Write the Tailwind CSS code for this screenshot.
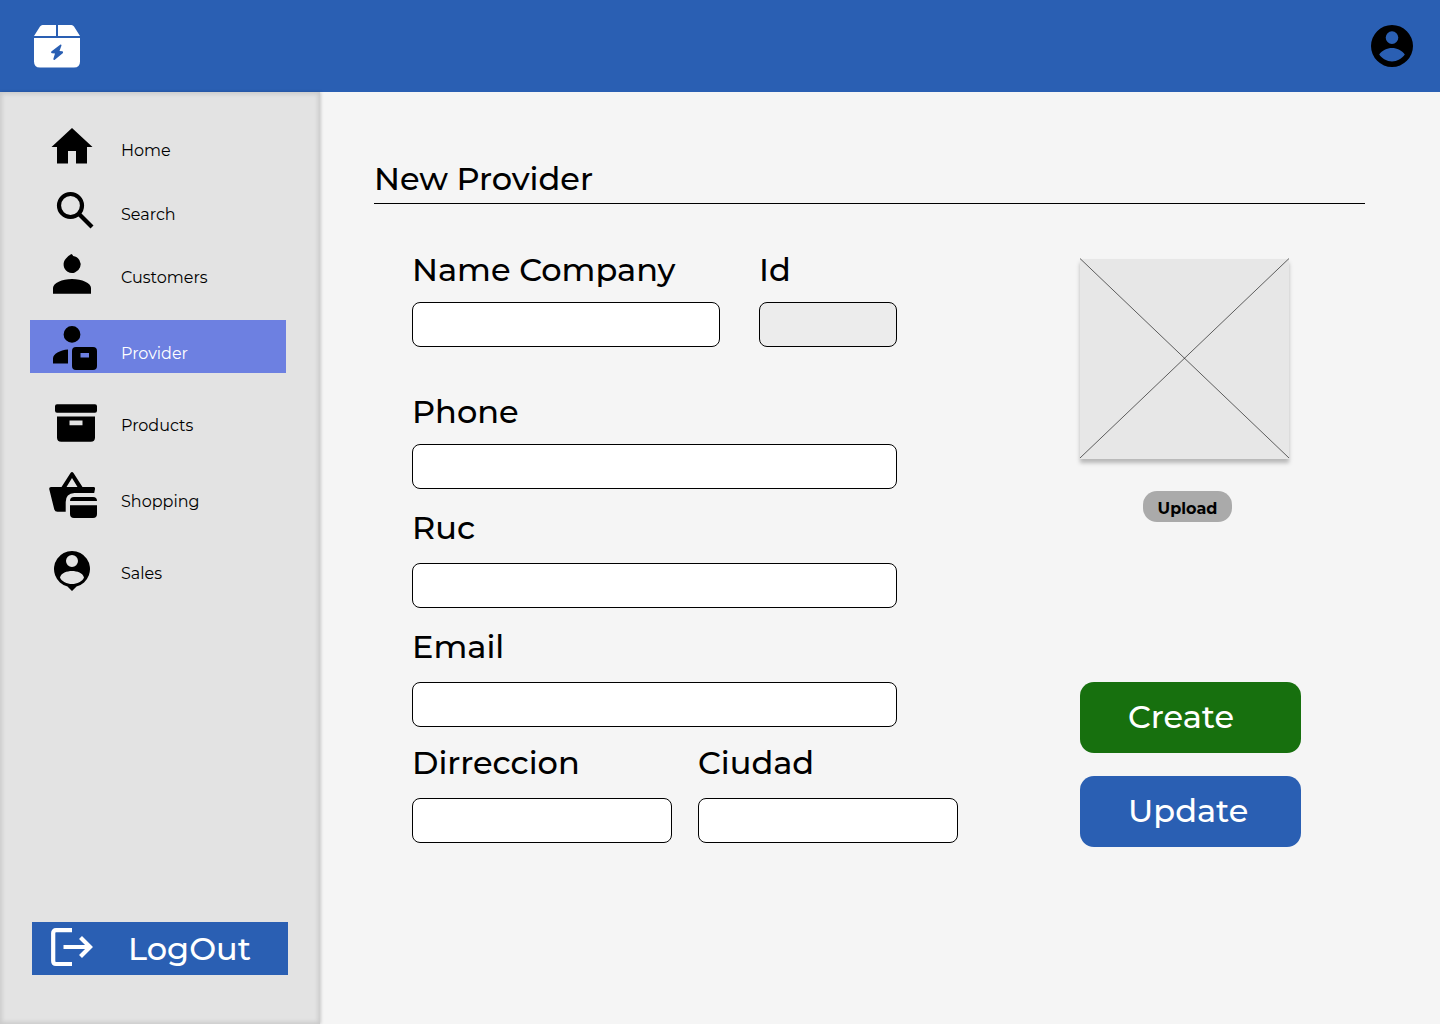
<!DOCTYPE html>
<html lang="en">
<head>
<meta charset="utf-8">
<meta name="viewport" content="width=device-width, initial-scale=1">
<title>New Provider</title>
<script src="https://cdn.jsdelivr.net/npm/@tailwindcss/browser@4"></script>
</head>
<body class="flex min-h-screen flex-col bg-[#f5f5f5] font-[Montserrat,Inter,sans-serif] text-black">
<header class="flex h-[92px] shrink-0 items-center justify-between bg-[#2a5fb3] pr-[27px] pl-[34px]">
  <a href="#" aria-label="Dashboard">
    <svg class="block h-[43px] w-[46px]" viewBox="0 0 46 43" fill="#fff">
      <path d="M8.5 0H22v11H0L6 1.5Q7 0 8.500 0zM24 0h13.500Q39 0 40 1.500L46 11H24zM0 13h46v23.500q0 6-6 6H6q-6 0-6-6z"/>
      <path fill="#2a5fb3" d="M26.500 19.500 17.300 26.500Q16.500 28 18 28.200L21 28.500 19.300 34Q19.500 35.500 20.800 34.800L29 28Q29.500 26.500 28.200 26.300L25.500 26 27.500 20.500Q27.500 19.300 26.500 19.500z"/>
    </svg>
  </a>
  <button type="button" aria-label="Account">
    <svg class="block size-[42px]" viewBox="0 0 42 42"><path fill-rule="evenodd" d="M21 0a21 21 0 1 1 0 42a21 21 0 1 1 0-42zM21 6.300a6.300 6.300 0 1 0 0 12.600a6.300 6.300 0 1 0 0-12.600zM8.200 29.500C11 25.500 16 23 21 23s10 2.500 12.800 6.500C31 33.500 26 36.500 21 36.500S11 33.500 8.200 29.500z"/></svg>
  </button>
</header>
<div class="flex grow">
  <aside class="flex w-80 shrink-0 flex-col bg-[#e3e3e3] pt-[25px] pb-[49px] shadow-[inset_0_0_4px_2px_rgba(0,0,0,0.11),1px_0_3px_rgba(0,0,0,0.18)]">
    <nav class="pr-[34px] pl-[30px]">
      <ul class="text-base leading-6">
        <li><a href="#" class="flex h-[53px] items-center gap-6 pl-[17px]">
          <svg class="h-[53px] w-[50px] shrink-0" viewBox="0 0 50 53"><path d="M25 11 45.500 30H40v16.500H29V34h-8v12.500H10V30H4.500z"/></svg>
          <span class="pt-3.5">Home</span></a></li>
        <li class="mt-[11px]"><a href="#" class="flex h-[53px] items-center gap-6 pl-[17px]">
          <svg class="h-[53px] w-[50px] shrink-0" viewBox="0 0 50 53" fill="none" stroke="#000" stroke-width="4.200"><circle cx="23.500" cy="24.500" r="11.500"/><path d="m32 33 13 13"/></svg>
          <span class="pt-3.5">Search</span></a></li>
        <li class="mt-[10px]"><a href="#" class="flex h-[53px] items-center gap-6 pl-[17px]">
          <svg class="h-[53px] w-[50px] shrink-0" viewBox="0 0 50 53"><path d="M24.500 10Q25.500 10.300 26.200 12A8.500 8.500 0 1 1 19 14.500Q21 11.500 24.500 10zM6 49.700V44C6 39 15 35 25 35s19 4 19 9v5.700z"/></svg>
          <span class="pt-3.5">Customers</span></a></li>
        <li class="mt-[23px]"><a href="#" aria-current="page" class="flex h-[53px] items-center gap-6 bg-[#6d80e1] pl-[17px] text-white">
          <svg class="h-[53px] w-[50px] shrink-0" viewBox="0 0 50 53"><path fill-rule="evenodd" d="M25 6a8.400 8.400 0 1 1 0 16.800A8.400 8.400 0 1 1 25 6zM6 43.500V38.500C6 34 13 30 21 29.500v14zM29 27h17q4 0 4 4v15q0 4-4 4H29q-4 0-4-4V31q0-4 4-4zM33.500 33v4.500h8.500V33z"/></svg>
          <span class="pt-3.5">Provider</span></a></li>
        <li class="mt-[19px]"><a href="#" class="flex h-[53px] items-center gap-6 pl-[17px]">
          <svg class="h-[53px] w-[50px] shrink-0" viewBox="0 0 50 53"><path fill-rule="evenodd" d="M10 12.200h38q2 0 2 2v4.500q0 2-2 2H10q-2 0-2-2v-4.500q0-2 2-2zM10 24.500h38v21q0 4.200-4.200 4.200H14.200q-4.200 0-4.200-4.200zM22.500 28.600v4.700h13v-4.700z"/></svg>
          <span class="pt-3.5">Products</span></a></li>
        <li class="mt-[23px]"><a href="#" class="flex h-[53px] items-center gap-6 pl-[17px]">
          <svg class="h-[53px] w-[50px] shrink-0" viewBox="0 0 50 53"><path fill-rule="evenodd" d="M14.500 19 23.500 5Q25 3 26.500 5L35.500 19H46.500Q48.300 19 48 21L47.200 25H27.500Q18.700 25.500 18.700 34V43.800H10.500Q8 43.800 7.300 41.500L2.200 21Q2 19 4 19zM19.500 19h11L25 10z"/><path d="M27 29h19q4 0 4 4H23q0-4 4-4zM23 37.200h27V46q0 4-4 4H27q-4 0-4-4z"/></svg>
          <span class="pt-3.5">Shopping</span></a></li>
        <li class="mt-[19px]"><a href="#" class="flex h-[53px] items-center gap-6 pl-[17px]">
          <svg class="h-[53px] w-[50px] shrink-0" viewBox="0 0 50 53"><path fill-rule="evenodd" d="M25 51 20.500 46.500A18 18 0 1 1 29.500 46.500zM25 15a6 6 0 1 0 0 12a6 6 0 1 0 0-12zM13 37.500c1.500 4 7 6.500 12 6.500s10.500-2.500 12-6.500C36 33 30 31 25 31s-11 2-12 6.500z"/></svg>
          <span class="pt-3.5">Sales</span></a></li>
      </ul>
    </nav>
    <button type="button" class="mx-8 mt-auto flex h-[53px] items-center gap-[34px] bg-[#2a5fb3] pl-[17px] text-[32px] font-medium text-white">
      <svg class="h-[53px] w-[45px] shrink-0" viewBox="0 0 45 53" fill="none" stroke="#fff" stroke-width="4.200"><path d="M23 8.200H7Q4.200 8.200 4.200 11V39Q4.200 42 7 42H23M14.500 25H41M31.500 15.500 41 25l-9.500 9.500"/></svg>
      <span>LogOut</span>
    </button>
  </aside>
  <main class="grow pt-[66px] pr-[75px] pb-10 pl-[54px]">
    <h1 class="h-[46px] border-b border-black text-[32px] leading-[42px] font-medium">New Provider</h1>
    <form class="flex justify-between pr-16 pl-[38px] text-[32px] font-medium">
      <div class="pt-[46px]">
        <div class="flex gap-[39px]">
          <div><label for="company" class="block leading-10">Name Company</label>
          <input id="company" type="text" class="mt-3 block h-[45px] w-[308px] rounded-lg border border-black bg-white px-3 text-lg"></div>
          <div><label for="pid" class="block leading-10">Id</label>
          <input id="pid" type="text" readonly class="mt-3 block h-[45px] w-[138px] rounded-lg border border-black bg-[#ececec] px-3 text-lg"></div>
        </div>
        <div class="mt-[45px]"><label for="phone" class="block leading-10">Phone</label>
        <input id="phone" type="tel" class="mt-3 block h-[45px] w-[485px] rounded-lg border border-black bg-white px-3 text-lg"></div>
        <div class="mt-[19px]"><label for="ruc" class="block leading-10">Ruc</label>
        <input id="ruc" type="text" class="mt-[15px] block h-[45px] w-[485px] rounded-lg border border-black bg-white px-3 text-lg"></div>
        <div class="mt-[19px]"><label for="email" class="block leading-10">Email</label>
        <input id="email" type="email" class="mt-[15px] block h-[45px] w-[485px] rounded-lg border border-black bg-white px-3 text-lg"></div>
        <div class="mt-4 flex gap-[26px]">
          <div><label for="address" class="block leading-10">Dirreccion</label>
          <input id="address" type="text" class="mt-[15px] block h-[45px] w-[260px] rounded-lg border border-black bg-white px-3 text-lg"></div>
          <div><label for="city" class="block leading-10">Ciudad</label>
          <input id="city" type="text" class="mt-[15px] block h-[45px] w-[260px] rounded-lg border border-black bg-white px-3 text-lg"></div>
        </div>
      </div>
      <div class="flex w-[221px] flex-col pt-[55px]">
        <div class="flex w-[209px] flex-col">
          <svg class="block h-[200px] w-full overflow-visible bg-[#e7e7e7] shadow-[0_4px_4px_rgba(0,0,0,0.25)]" viewBox="0 0 209 200" fill="none" stroke="#000" stroke-opacity=".6" stroke-width="1" role="img" aria-label="Image placeholder"><path d="M0-.500 209 199M209-.500 0 199"/></svg>
        </div>
        <button type="button" class="mt-8 ml-[63px] h-[31px] w-[89px] rounded-[14px] bg-[#aaa] pt-1 text-base leading-6 font-bold">Upload</button>
        <button type="submit" class="mt-40 h-[71px] rounded-[14px] bg-[#17700e] pb-0.5 pl-12 text-left text-white">Create</button>
        <button type="button" class="mt-[23px] h-[71px] rounded-[14px] bg-[#2a5fb3] pb-0.5 pl-12 text-left text-white">Update</button>
      </div>
    </form>
  </main>
</div>
</body>
</html>
